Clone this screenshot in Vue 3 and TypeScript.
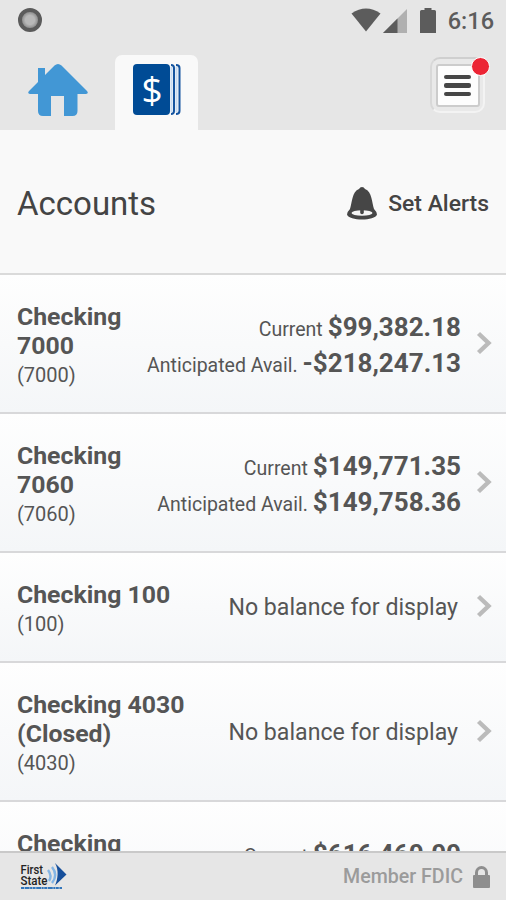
<script setup lang="ts">
interface Account {
  name: string
  number: string
  current?: string
  available?: string
}

const accounts: Account[] = [
  { name: 'Checking 7000', number: '7000', current: '$99,382.18', available: '-$218,247.13' },
  { name: 'Checking 7060', number: '7060', current: '$149,771.35', available: '$149,758.36' },
  { name: 'Checking 100', number: '100' },
  { name: 'Checking 4030 (Closed)', number: '4030' },
  { name: 'Checking', number: '', current: '$616,460.00', available: '' },
]
</script>

<template>
  <div class="screen">
    <header class="top">
      <div class="status">
        <span class="dot"></span>
        <div class="status-right">
          <svg class="wifi" width="30" height="24" viewBox="0 0 30 24"><path d="M0.500 5.500Q15-4.500 29.500 5.500L15 23.500Z" fill="#5c5c5c" /></svg>
          <svg class="signal" width="24" height="24" viewBox="0 0 24 24"><path d="M24 0V24H0Z" fill="#b0b0b0" /><path d="M14.500 9.500V24H0Z" fill="#5c5c5c" /></svg>
          <svg class="battery" width="16" height="25" viewBox="0 0 16 25"><path d="M4.500 0H11.500V2H14.500Q16 2 16 3.500V25H0V3.500Q0 2 1.500 2H4.500Z" fill="#5c5c5c" /></svg>
          <span class="clock">6:16</span>
        </div>
      </div>
      <nav class="nav">
        <a class="home">
          <svg width="60" height="53" viewBox="0 0 60 53">
            <path d="M26.500 1.500Q30-1.500 33.500 1.500L59 27Q61 29.800 58 30H49.500V47Q49.500 52 44.500 52H36V32H23V52H15Q10 52 10 47V30H2Q-1 29.800 1 27L10 18V4H17V11Z" fill="#4297d5" />
          </svg>
        </a>
        <a class="tab">
          <svg width="48" height="52" viewBox="0 0 48 52">
            <rect x="0" y="0" width="37" height="51" rx="4" fill="#004b95" />
            <path d="M38 1Q41 1 41 4V47Q41 50 38 50M43 1Q46.500 1 46.500 4V47Q46.500 50 43 50" fill="none" stroke="#1454a0" stroke-width="2" />
            <path d="M38.500 3V48M43.500 3V48" stroke="#c8dcf2" stroke-width="2" />
            <text x="19" y="38.500" text-anchor="middle" class="dollar">$</text>
          </svg>
        </a>
        <button class="menu" aria-label="Menu">
          <span class="menu-face"><i></i><i></i><i></i></span>
          <b class="badge"></b>
        </button>
      </nav>
    </header>

    <section class="heading">
      <h1>Accounts</h1>
      <a class="alerts">
        <svg width="30" height="33" viewBox="0 0 30 33">
          <path d="M15 0Q17 0 18 2C25 4.500 25 16 27 22Q30 25 30 27.500C29 31 22 32.500 15 32.500S1 31 0 27.500Q0 25 3 22C5 16 5 4.500 12 2Q13 0 15 0Z" fill="#464646" />
          <ellipse cx="15" cy="26" rx="10.500" ry="2.800" fill="#f5f5f5" />
          <path d="M13.200 22H16.800V25.500A1.800 1.800 0 0 1 13.200 25.500Z" fill="#464646" />
        </svg>
        <span>Set Alerts</span>
      </a>
    </section>

    <main class="list">
      <article v-for="account in accounts" :key="account.name" class="row" :class="{ tall: account.current }">
        <div class="ident" :class="{ narrow: account.current }">
          <div class="name">{{ account.name }}</div>
          <div v-if="account.number" class="number">({{ account.number }})</div>
        </div>
        <div v-if="account.current" class="balances">
          <div class="balance"><span>Current</span><strong>{{ account.current }}</strong></div>
          <div v-if="account.available" class="balance"><span>Anticipated Avail.</span><strong>{{ account.available }}</strong></div>
        </div>
        <div v-else class="empty">No balance for display</div>
        <svg class="chevron" width="16" height="24" viewBox="0 0 16 24"><path d="M2.500 2.500L12.500 12L2.500 21.500" fill="none" stroke="#bbb" stroke-width="4.400" /></svg>
      </article>
    </main>

    <footer class="footer">
      <svg width="48" height="28" viewBox="0 0 48 28">
        <text x="0.500" y="11" textLength="22.500" lengthAdjust="spacingAndGlyphs" class="logo">First</text>
        <text x="0.500" y="21.500" textLength="27" lengthAdjust="spacingAndGlyphs" class="logo">State</text>
        <path d="M35 0L46.500 11.500L35 22.500C38 16 39 7 35 0Z" fill="#164f9b" />
        <path d="M32 4C36 9 36 15 32 20M28 7C31 11 31 15 29 18" fill="none" stroke="#83b5e6" stroke-width="2.400" />
        <path d="M1 25H42" stroke="#3376bb" stroke-width="2" stroke-dasharray="3 .6 5 .5 2 .5" />
      </svg>
      <div class="member">
        <span>Member FDIC</span>
        <svg width="17" height="22" viewBox="0 0 17 22"><path d="M3.500 10V6.500A5 5 0 0 1 13.500 6.500V10" fill="none" stroke="#8e8e8e" stroke-width="3" /><rect y="9" width="17" height="13" rx="1" fill="#8e8e8e" /></svg>
      </div>
    </footer>
  </div>
</template>

<style>
body { margin: 0; overflow: hidden; }
</style>

<style scoped>
* { box-sizing: border-box; }
.screen { width: 506px; height: 900px; display: flex; flex-direction: column; overflow: hidden; background: #f9f9f9; font-family: Roboto, sans-serif; color: #555; }
.top { height: 130px; flex: none; background: #e6e6e6; display: flex; flex-direction: column; }
.status { height: 55px; padding: 8px 12px 0 18px; display: flex; justify-content: space-between; align-items: flex-start; }
.dot { width: 24px; height: 24px; border: 4px solid #5b5b5b; border-radius: 50%; background: radial-gradient(circle, #b8b8b8 0 40%, #969696 65%); }
.status-right { display: flex; height: 25px; align-items: flex-start; }
.signal { margin: 1px 0 0 2px; }
.battery { margin-left: 13px; }
.clock { margin-left: 12px; font-size: 23.500px; line-height: 27px; font-weight: 500; color: #5c5c5c; }
.nav { height: 75px; display: flex; align-items: flex-start; padding: 0 21px 0 28px; }
.home { padding-top: 9px; width: 87px; height: 75px; }
.tab { width: 83px; height: 75px; background: #f9f9f9; border-radius: 7px 7px 0 0; padding: 9px 0 0 18px; }
.nav svg { display: block; }
.dollar { font-family: "Open Sans", sans-serif; font-size: 37px; fill: #fff; }
.menu { position: relative; margin: 2px 0 0 auto; width: 55px; height: 56px; padding: 5px; display: flex; justify-content: center; border: 2px solid #f3f3f3; border-top-color: #cfcfcf; border-left-color: #d8d8d8; border-radius: 10px; background: #e9e9e9; }
.menu-face { width: 44px; height: 43px; flex: none; display: flex; flex-direction: column; align-items: center; justify-content: center; gap: 4px; border: 2px solid #ccc; border-radius: 3px; background: #fdfdfd; }
.menu-face i { width: 27px; height: 4.500px; border-radius: 2px; background: #464646; }
.badge { position: absolute; top: -2px; right: -7px; width: 19px; height: 19px; border: 1px solid #fff; border-radius: 50%; background: #ec2434; }
.heading { height: 145px; flex: none; display: flex; align-items: center; justify-content: space-between; padding: 4px 17px 0; border-bottom: 2px solid #dadada; }
h1 { margin: 0; font-size: 33px; line-height: 40px; font-weight: 400; color: #444; }
.alerts { display: flex; align-items: center; gap: 11px; font-size: 22.900px; font-weight: 500; color: #444; }
.list { flex: 1; min-height: 0; overflow: hidden; }
.row { display: flex; padding: 27px 14px 21px 17px; border-bottom: 2px solid #d8d8da; background: linear-gradient(#fefefe, #f4f6f8); }
.tall { min-height: 139px; }
.ident { width: 200px; flex: none; }
.ident.narrow { width: 110px; }
.name { font-size: 24.800px; line-height: 29px; font-weight: 700; }
.number { font-size: 20px; line-height: 31px; }
.balances { flex: 1; padding-top: 7px; white-space: nowrap; }
.balance { height: 36px; display: flex; align-items: baseline; justify-content: flex-end; gap: 5px; font-size: 19.500px; line-height: 36px; }
.balance strong { font-size: 26px; font-weight: 700; }
.empty { flex: 1; align-self: center; text-align: right; white-space: nowrap; font-size: 23.150px; line-height: 28px; margin-right: 3px; position: relative; top: -2px; }
.chevron { flex: none; align-self: center; margin-left: 15px; position: relative; top: -4px; }
.footer { height: 49px; flex: none; display: flex; align-items: center; justify-content: space-between; padding: 0 16px 0 20px; background: #e6e6e6; border-top: 2px solid #c9c9c9; }
.logo { font-size: 12.500px; font-weight: 500; fill: #222; }
.member { display: flex; align-items: center; gap: 10px; font-size: 19.600px; font-weight: 500; color: #9b9b9b; }
</style>
